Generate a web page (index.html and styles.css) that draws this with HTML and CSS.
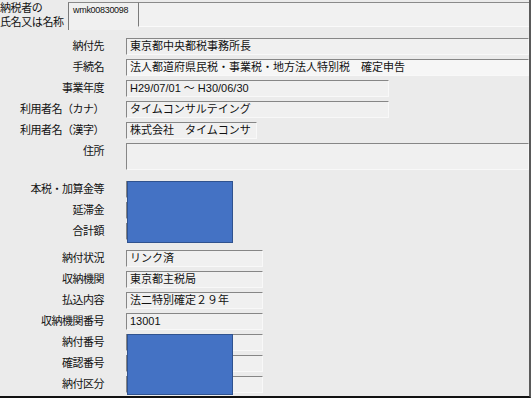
FILE: index.html
```html
<!DOCTYPE html>
<html lang="ja">
<head>
<meta charset="UTF-8" />
<title>納付情報</title>
<link rel="stylesheet" href="styles.css">
</head>
<body>
<div class="frame">
  <div class="head">
    <div class="head-label">納税者の<br>氏名又は名称</div>
    <div class="head-id">wmk00830098</div>
    <div class="head-name"></div>
  </div>

  <div class="form">
    <div class="row"><span class="lbl">納付先</span><span class="fld fld-full">東京都中央都税事務所長</span></div>
    <div class="row"><span class="lbl">手続名</span><span class="fld fld-full fld-light">法人都道府県民税・事業税・地方法人特別税　確定申告</span></div>
    <div class="row"><span class="lbl">事業年度</span><span class="fld fld-wide">H29/07/01 ～ H30/06/30</span></div>
    <div class="row"><span class="lbl">利用者名（カナ）</span><span class="fld fld-wide">タイムコンサルテイング</span></div>
    <div class="row"><span class="lbl">利用者名（漢字）</span><span class="fld fld-kanji">株式会社　タイムコンサ</span></div>
    <div class="row row-tall"><span class="lbl">住所</span><span class="fld fld-full"></span></div>

    <div class="group group-amount">
      <div class="row"><span class="lbl">本税・加算金等</span><span class="fld fld-amount"></span></div>
      <div class="row"><span class="lbl">延滞金</span><span class="fld fld-amount"></span></div>
      <div class="row"><span class="lbl">合計額</span><span class="fld fld-amount"></span></div>
      <div class="mask mask-amount"></div>
    </div>

    <div class="group group-pay">
      <div class="row"><span class="lbl">納付状況</span><span class="fld fld-short">リンク済</span></div>
      <div class="row"><span class="lbl">収納機関</span><span class="fld fld-short">東京都主税局</span></div>
      <div class="row"><span class="lbl">払込内容</span><span class="fld fld-short">法二特別確定２９年</span></div>
      <div class="row"><span class="lbl">収納機関番号</span><span class="fld fld-short">13001</span></div>
      <div class="group group-code">
        <div class="row"><span class="lbl">納付番号</span><span class="fld fld-short"></span></div>
        <div class="row"><span class="lbl">確認番号</span><span class="fld fld-short"></span></div>
        <div class="row"><span class="lbl">納付区分</span><span class="fld fld-short"></span></div>
        <div class="mask mask-code"></div>
      </div>
    </div>
  </div>
</div>
</body>
</html>
```

FILE: styles.css
```css
/* Reset */
* {
  box-sizing: border-box;
}
html, body {
  margin: 0;
  padding: 0;
  background: #ffffff;
  font-family: "Liberation Sans", "Noto Sans CJK JP", sans-serif;
  font-size: 11px;
  color: #111;
}
.frame {
  width: 531px;
  height: 398px;
  background: #ebebeb;
  border-right: 2px solid #5a5a5a;
  border-bottom: 2px solid #111;
  overflow: hidden;
}

/* Header: taxpayer name */
.head {
  display: flex;
  height: 30px;
}
.head-label {
  width: 68px;
  padding-top: 1px;
  line-height: 14px;
  letter-spacing: -0.4px;
  white-space: nowrap;
}
.head-id {
  width: 70px;
  height: 28px;
  margin-top: 2px;
  padding: 1px 0 0 4px;
  font-size: 9px;
  line-height: 12px;
  letter-spacing: -0.3px;
  background: #f0f0f0;
  border-top: 1px solid #8a8a8a;
  border-left: 1px solid #7a7a7a;
}
.head-name {
  flex: 1;
  height: 25px;
  margin-top: 2px;
  background: #f1f1f1;
  border-top: 1px solid #8a8a8a;
  border-left: 1px solid #7a7a7a;
  border-bottom: 1px solid #fafafa;
}

/* Form rows */
.form {
  display: flex;
  flex-direction: column;
  gap: 4px;
  padding-top: 8px;
}
.group {
  position: relative;
  display: flex;
  flex-direction: column;
  gap: 4px;
}
.group-amount {
  margin-top: 7px;
}
.group-pay {
  margin-top: 6px;
}
.row {
  display: flex;
  align-items: flex-start;
  gap: 22px;
  height: 17px;
}
.row-tall {
  height: 27px;
}
.lbl {
  width: 104px;
  flex: none;
  text-align: right;
  line-height: 17px;
  letter-spacing: -0.5px;
  white-space: nowrap;
}
.fld {
  display: block;
  height: 100%;
  padding-left: 3px;
  line-height: 15px;
  white-space: nowrap;
  overflow: hidden;
  background: #f0f0f0;
  border: 1px solid;
  border-color: #868686 #f8f8f8 #f8f8f8 #868686;
}
.fld-full {
  flex: 1;
}
.fld-light {
  background: #f6f6f6;
}
.fld-wide {
  width: 263px;
}
.fld-kanji {
  width: 131px;
}
.fld-amount {
  width: 107px;
}
.fld-short {
  width: 137px;
}

/* Redaction overlays */
.mask {
  position: absolute;
  left: 127px;
  top: 0;
  width: 106px;
  background: #4472c4;
  border: 1px solid #2f528f;
}
.mask-amount {
  height: 62px;
}
.mask-code {
  height: 61px;
}
```
